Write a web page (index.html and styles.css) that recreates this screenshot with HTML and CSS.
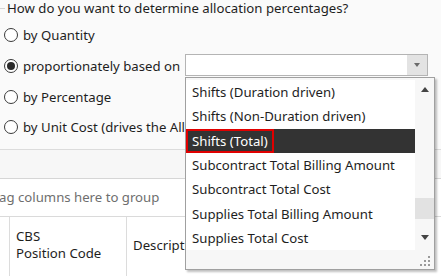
FILE: index.html
```html
<!DOCTYPE html>
<html lang="en">

<head>
    <meta charset="UTF-8" />
    <title>Allocation</title>
    <link rel="stylesheet" href="styles.css">
</head>

<body>
    <div class="screen">
        <div class="alloc-group">
            <div class="group-title">How do you want to determine allocation percentages?</div>

            <div class="radio-list">
                <div class="radio-row">
                    <span class="radio"></span>
                    <span class="radio-label">by Quantity</span>
                </div>
                <div class="radio-row">
                    <span class="radio checked"></span>
                    <span class="radio-label label-fixed">proportionately based on</span>
                    <div class="combo">
                        <div class="combo-value"></div>
                        <div class="combo-button"><span class="arrow-down small"></span></div>
                    </div>
                </div>
                <div class="radio-row">
                    <span class="radio"></span>
                    <span class="radio-label">by Percentage</span>
                </div>
                <div class="radio-row">
                    <span class="radio"></span>
                    <span class="radio-label label-clipped">by Unit Cost (drives the Allocation)</span>
                </div>
            </div>
        </div>

        <div class="toolbar-strip"></div>

        <div class="group-panel">ag columns here to group</div>

        <div class="grid-header">
            <div class="col col-indicator"></div>
            <div class="col col-code">CBS<br>Position Code</div>
            <div class="col col-desc">Description</div>
        </div>

        <div class="dropdown">
            <div class="dropdown-body">
                <ul class="item-list">
                    <li>Shifts (Duration driven)</li>
                    <li>Shifts (Non-Duration driven)</li>
                    <li class="selected"><span class="focus-box">Shifts (Total)</span></li>
                    <li>Subcontract Total Billing Amount</li>
                    <li>Subcontract Total Cost</li>
                    <li>Supplies Total Billing Amount</li>
                    <li>Supplies Total Cost</li>
                </ul>
                <div class="scrollbar">
                    <span class="arrow-up"></span>
                    <div class="thumb"></div>
                    <span class="arrow-down"></span>
                </div>
            </div>
            <div class="dropdown-footer">
                <div class="grip">
                    <i></i><i></i><i></i><i></i><i></i><i></i>
                </div>
            </div>
        </div>
    </div>
</body>

</html>
```

FILE: styles.css
```css
* {
    box-sizing: border-box;
}

body {
    margin: 0;
    font-family: "Noto Sans", "Open Sans", sans-serif;
    font-size: 13.2px;
    color: #1e1e1e;
    background-color: #fafafa;
}

.screen {
    position: relative;
    width: 441px;
    height: 276px;
    overflow: hidden;
    display: flex;
    flex-direction: column;
}

.alloc-group {
    height: 150px;
    border-bottom: 1px solid #dcdcdc;
    position: relative;
}

.alloc-group::before {
    content: "";
    position: absolute;
    left: 0;
    top: 8px;
    width: 5px;
    border-top: 1px solid #d4d4d4;
}

.group-title {
    height: 18px;
    line-height: 17px;
    padding-left: 7px;
}

.radio-list {
    padding-top: 2px;
}

.radio-row {
    display: flex;
    align-items: center;
    height: 30.7px;
    padding-left: 4px;
}

.radio {
    width: 14px;
    height: 14px;
    border: 1px solid #3a3a3a;
    border-radius: 50%;
    background-color: #fff;
    display: flex;
    align-items: center;
    justify-content: center;
    flex-shrink: 0;
}

.radio.checked::after {
    content: "";
    width: 8px;
    height: 8px;
    border-radius: 50%;
    background-color: #2a2a2a;
}

.radio-label {
    margin-left: 5px;
    white-space: nowrap;
}

.label-fixed {
    width: 162px;
}

.label-clipped {
    width: 162px;
    overflow: hidden;
}

.combo {
    display: flex;
    width: 243px;
    height: 22px;
    margin-bottom: 3px;
    border: 1px solid #b4b4b4;
    background-color: #fff;
}

.combo-value {
    flex: 1;
}

.combo-button {
    width: 20px;
    background-color: #e3e3e3;
    display: flex;
    align-items: center;
    justify-content: center;
}

.arrow-down,
.arrow-up {
    width: 0;
    height: 0;
    border-left: 4px solid transparent;
    border-right: 4px solid transparent;
}

.arrow-down {
    border-top: 5px solid #444;
}

.arrow-down.small {
    border-left-width: 3.5px;
    border-right-width: 3.5px;
    border-top: 4px solid #6a6a6a;
}

.arrow-up {
    border-bottom: 5px solid #444;
}

.toolbar-strip {
    height: 29px;
    background-color: #f7f7f7;
    border-bottom: 1px solid #d6d6d6;
}

.group-panel {
    height: 38px;
    line-height: 37px;
    background-color: #fff;
    color: #6e6e6e;
    text-indent: -1px;
    border-bottom: 1px solid #dadada;
}

.grid-header {
    flex: 1;
    display: flex;
    background-color: #fff;
}

.col {
    border-right: 1px solid #dcdcdc;
}

.col-indicator {
    width: 10px;
}

.col-code {
    width: 117px;
    padding: 11px 0 0 6px;
    line-height: 17px;
}

.col-desc {
    width: 58px;
    padding: 19px 0 0 6px;
    border-right: none;
    white-space: nowrap;
    overflow: hidden;
}

.dropdown {
    position: absolute;
    left: 185px;
    top: 77px;
    width: 250px;
    height: 193px;
    border: 1px solid #a0a0a0;
    background-color: #f7f7f7;
    box-shadow: 2px 2px 2px rgba(0, 0, 0, 0.25);
    display: flex;
    flex-direction: column;
}

.dropdown-body {
    display: flex;
    padding-top: 2px;
}

.item-list {
    list-style: none;
    margin: 0;
    padding: 0;
    width: 229px;
    background-color: #fff;
}

.item-list li {
    height: 24.33px;
    display: flex;
    align-items: center;
    padding-left: 6px;
    white-space: nowrap;
}

.item-list li.selected {
    background-color: #333;
    color: #fff;
    padding-left: 0;
    align-items: stretch;
}

.focus-box {
    display: flex;
    align-items: center;
    padding: 0 4px;
    border: 2px solid #e00000;
}

.scrollbar {
    flex: 1;
    position: relative;
    display: flex;
    flex-direction: column;
    align-items: center;
    justify-content: space-between;
    padding: 7px 0 10px;
}

.thumb {
    position: absolute;
    left: 0;
    right: 0;
    top: 118px;
    height: 21px;
    background-color: #e2e2e2;
}

.dropdown-footer {
    flex: 1;
    position: relative;
}

.grip {
    position: absolute;
    right: 4px;
    bottom: 3px;
    width: 10px;
    height: 10px;
}

.grip i {
    position: absolute;
    width: 2px;
    height: 2px;
    background-color: #9a9a9a;
}

.grip i:nth-child(1) { right: 0; top: 0; }
.grip i:nth-child(2) { right: 0; top: 4px; }
.grip i:nth-child(3) { right: 4px; top: 4px; }
.grip i:nth-child(4) { right: 0; top: 8px; }
.grip i:nth-child(5) { right: 4px; top: 8px; }
.grip i:nth-child(6) { right: 8px; top: 8px; }
```
